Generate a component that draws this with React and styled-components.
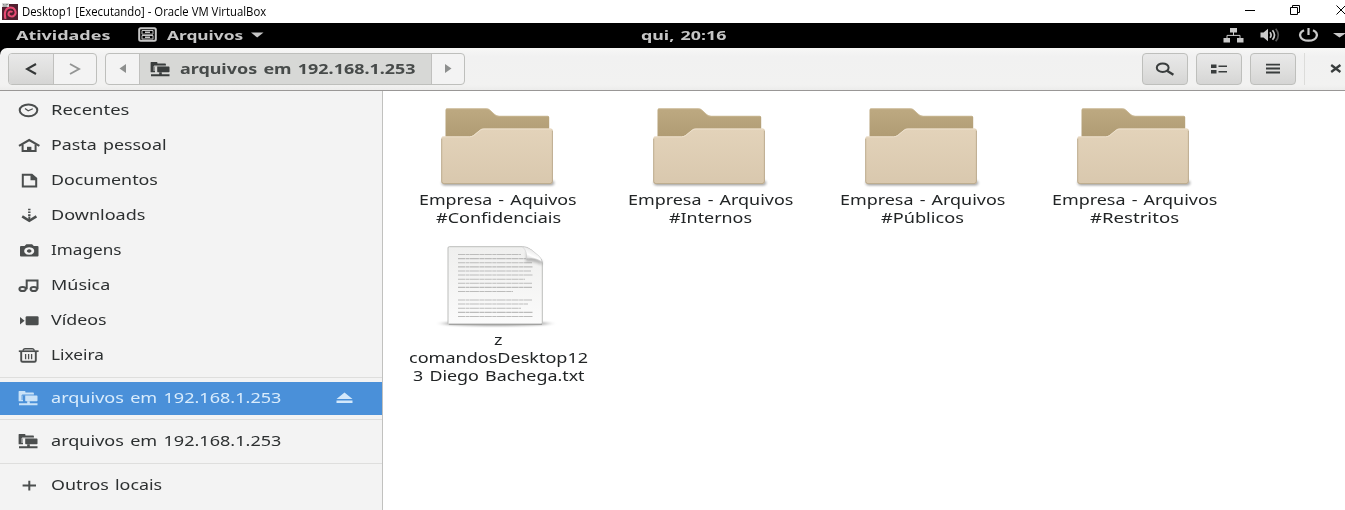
import React, { useLayoutEffect, useRef, useState } from 'react';
import styled, { createGlobalStyle, css } from 'styled-components';

const GlobalStyle = createGlobalStyle`
  * { box-sizing: border-box; }
  html, body { margin: 0; padding: 0; background: #fff; overflow: hidden; }
  body { font-family: "Noto Sans", "Open Sans", sans-serif; font-size: 14px; color: #2b2e2f; }
  svg { display: block; flex: none; }
`;

/* Text with wide proportions, fitted to a given width */
const TextBox = styled.span`
  display: block;
  flex: none;
  width: ${(p) => p.$w}px;
  line-height: 18px;
  white-space: nowrap;
  text-align: left;
  word-spacing: 1.2px;
`;
const TextInner = styled.span`
  display: inline-block;
  transform-origin: 0 50%;
`;

function WideText({ w, children, className }) {
  const ref = useRef(null);
  const [scale, setScale] = useState(1);
  useLayoutEffect(() => {
    setScale(w / ref.current.offsetWidth);
  }, [w, children]);
  return (
    <TextBox $w={w} className={className}>
      <TextInner ref={ref} style={{ transform: `scaleX(${scale})` }}>{children}</TextInner>
    </TextBox>
  );
}

const Screen = styled.div`
  width: 1345px;
  height: 510px;
  display: flex;
  flex-direction: column;
  overflow: hidden;
  background: #000;
`;

const TitleBar = styled.header`
  height: 23px;
  flex: none;
  display: flex;
  align-items: center;
  padding-left: 2px;
  background: #fff;
  color: #000;
`;
const Title = styled(WideText)`
  font-family: "Open Sans", "Noto Sans", sans-serif;
  font-size: 12px;
  margin-left: 4px;
  word-spacing: 0;
`;
const WindowControls = styled.div`
  margin-left: auto;
  display: flex;
  align-items: center;
  height: 23px;
`;

const TopBar = styled.nav`
  height: 25px;
  flex: none;
  display: flex;
  align-items: center;
  padding: 0 0 2px 16px;
  background: #000;
  color: #c6c6c6;
  font-weight: 700;
  font-size: 13px;
`;
const AppMenu = styled.div`
  display: flex;
  align-items: center;
  margin-left: 28px;
  gap: 10px;
`;
const MenuArrow = styled.svg`
  margin-left: -2px;
`;
const Clock = styled.div`
  margin-left: 377px;
`;
const Tray = styled.div`
  margin-left: auto;
  height: 23px;
`;

const HeaderBar = styled.div`
  height: 43px;
  flex: none;
  display: flex;
  align-items: center;
  padding: 0 0 1px 8px;
  background: linear-gradient(#f7f7f6, #f1f1f1 20%, #f2f2f1 88%, #ececeb);
  border-bottom: 1px solid #999796;
  border-top-left-radius: 7px;
`;
const raised = css`
  background: linear-gradient(#e9e9e9, #dededd 60%, #d5d5d4);
`;
const ButtonGroup = styled.div`
  display: flex;
  height: 32px;
  margin-right: 8px;
  border: 1px solid #bebfbc;
  border-radius: 4px;
  overflow: hidden;
  background: #f3f3f3;
`;
const Segment = styled.button`
  display: flex;
  align-items: center;
  justify-content: ${(p) => (p.$start ? 'flex-start' : 'center')};
  width: ${(p) => p.$w}px;
  height: 100%;
  padding: ${(p) => (p.$start ? '0 0 0 10px' : '0')};
  gap: 8px;
  border: 0;
  border-right: ${(p) => (p.$last ? '0' : '1px solid #c0c0be')};
  background: transparent;
  font: 700 13.5px "Noto Sans", sans-serif;
  color: #474b4a;
  ${(p) => p.$raised && raised}
  ${(p) => p.$active && css`background: #d7d8d6;`}
`;
const Actions = styled.div`
  margin-left: auto;
  display: flex;
  align-items: center;
  gap: 8px;
`;
const ToolButton = styled.button`
  width: 46px;
  height: 32px;
  padding: 0;
  display: flex;
  align-items: center;
  justify-content: center;
  border: 1px solid #bebfbc;
  border-radius: 4px;
  ${raised}
`;
const CloseArea = styled.div`
  width: 41px;
  height: 32px;
  border-left: 1px solid #dcdcda;
  display: flex;
  align-items: center;
  padding-left: 25px;
`;

const Body = styled.div`
  flex: 1;
  display: flex;
  min-height: 0;
`;
const Sidebar = styled.aside`
  width: 383px;
  flex: none;
  padding-top: 2px;
  background: #f3f3f3;
  border-right: 1px solid #c1c1bf;
`;
const Place = styled.div`
  display: flex;
  align-items: center;
  height: ${(p) => p.$h || 35}px;
  padding: 0 0 1px 18px;
  gap: 11px;
  color: ${(p) => (p.$selected ? '#d9ecfc' : '#2d3031')};
  background: ${(p) => (p.$selected ? '#4a90d9' : 'transparent')};
`;
const Eject = styled.span`
  margin-left: auto;
  padding-right: 29px;
`;
const Divider = styled.hr`
  height: 1px;
  margin: 4px 0;
  border: 0;
  background: #dededd;
`;

const Files = styled.main`
  flex: 1;
  background: #fff;
  padding: 13px 0 0 9px;
  display: grid;
  grid-template-columns: repeat(4, 212px);
  grid-auto-rows: 140px;
  align-content: start;
`;
const FileItem = styled.figure`
  margin: 0;
  display: flex;
  flex-direction: column;
  align-items: center;
`;
const Caption = styled.figcaption`
  margin-top: 3px;
  display: flex;
  flex-direction: column;
  align-items: center;
  color: #222526;
`;

const G = '#4b4e4e';

const placeIcons = {
  recent: (
    <g fill="none" stroke={G} strokeWidth="2">
      <ellipse cx="10.5" cy="8.3" rx="8.8" ry="5.9" />
      <path d="M7 6.4l3.2 2.3 4.6-2" strokeWidth="1.2" />
    </g>
  ),
  home: (
    <g>
      <path d="M1 8.900L11.200 3l10.200 5.900" fill="none" stroke={G} strokeWidth="2.200" />
      <path d="M4.600 7.500v6.600h13V7.500" fill="none" stroke={G} strokeWidth="2" />
      <path d="M9 14.500V9.800h4.400v4.700z" fill={G} />
    </g>
  ),
  doc: (
    <g>
      <path d="M4.800 2.700h9l4.400 3.800v8H4.800z" fill="none" stroke={G} strokeWidth="2" />
      <path d="M12.500 2.500h1.700l4.500 3.900v1.800h-6.200z" fill={G} />
    </g>
  ),
  download: (
    <g fill="none" stroke={G}>
      <path d="M11.300 1.800v1.500M11.300 4.500v1.600M11.300 7.300v1.600" strokeWidth="2.400" />
      <path d="M11.300 9.500v4" strokeWidth="2" />
      <path d="M4.200 9.400l7.100 4.400 7.100-4.400" strokeWidth="2.500" />
    </g>
  ),
  camera: (
    <path d="M3 4h3.600l1.700-1.700h5.800L15.800 4h3.700q1 0 1 1v8.500q0 1-1 1H3q-1 0-1-1V5q0-1 1-1zM11.200 5.200a5 3.800 0 1 0 .01 0zM11.200 7.300a2.300 1.700 0 1 1-.01 0z" fill={G} fillRule="evenodd" />
  ),
  music: (
    <g fill="none" stroke={G} strokeWidth="2">
      <ellipse cx="4.600" cy="12" rx="3.200" ry="2.100" />
      <ellipse cx="15.800" cy="12" rx="3.200" ry="2.100" />
      <path d="M8.700 12.300V3.400H19.500V12.300" />
    </g>
  ),
  video: (
    <g fill={G}>
      <rect x="7.600" y="4.200" width="13" height="9" rx="1.300" />
      <path d="M2 5l4.600 3.700L2 12.500z" />
    </g>
  ),
  trash: (
    <g fill="none" stroke={G}>
      <path d="M0.800 4.200h19.800" strokeWidth="1.700" />
      <path d="M4.800 3.600q1-1.800 2.200-1.800h7.300q1.200 0 2.200 1.800" strokeWidth="1.500" />
      <path d="M3.200 4.500v8.900q0 1.400 1.400 1.400h11.800q1.400 0 1.400-1.400V4.500" strokeWidth="1.900" />
      <path d="M7.600 6.900v5.400M10.600 6.900v5.400M13.600 6.900v5.400" strokeWidth="1.300" />
    </g>
  ),
  plus: <path d="M4.600 8.500h13.400M11.300 3.700v9.800" stroke={G} strokeWidth="2" fill="none" />,
};

function NetFolder({ color = G, gap = '#f3f3f3' }) {
  return (
    <svg width="22" height="16" viewBox="0 0 22 16">
      <path d="M0.600 1.600q0-.6.600-.6h5.600q.6 0 .6.600v1h7.800q.700 0 .700.700v2H5v6H1.200q-.6 0-.6-.6z" fill={color} />
      <path d="M4.100 10V5h12" stroke={gap} strokeWidth="0.900" fill="none" />
      <path d="M7.200 5.600h11.600q.700 0 .700.700v4.200q0 .700-.700.700H7.900q-.700 0-.700-.700z" fill={color} />
      <path d="M9.200 11.200h2.600v2.100h7.700v1.900H1v-1.900h8.200z" fill={color} />
    </svg>
  );
}

function PlaceIcon({ name }) {
  return <svg width="22" height="16" viewBox="0 0 22 16">{placeIcons[name]}</svg>;
}

function FolderArt() {
  return (
    <svg width="124" height="84" viewBox="0 0 124 84">
      <defs>
        <linearGradient id="back" x2="0" y2="1">
          <stop offset="0" stopColor="#bda981" />
          <stop offset="1" stopColor="#a8946c" />
        </linearGradient>
        <linearGradient id="front" x2="0" y2="1">
          <stop offset="0" stopColor="#e3d3ba" />
          <stop offset="1" stopColor="#d9c8ae" />
        </linearGradient>
        <filter id="soft" x="-10%" y="-100%" width="120%" height="300%"><feGaussianBlur stdDeviation="1.500 1" /></filter>
      </defs>
      <rect x="6" y="76.500" width="112" height="5" rx="2" fill="#000" opacity=".35" filter="url(#soft)" />
      <path d="M9.500 50V6q0-1.500 1.500-1.500h39q2.500 0 4 1.400l5 4.700q1.500 1.300 4 1.300h48.800q1.400 0 1.400 1.400V50z" fill="url(#back)" />
      <path d="M10 5.200Q10.500 4.800 11 4.800h39q2.500 0 4 1.400l5 4.700q1.500 1.300 4 1.300h49" fill="none" stroke="#cdbb98" strokeWidth=".8" />
      <path d="M5.300 34.400q0-2 2-2h26q2.600 0 4.300-1.400l6.200-5.100q1.600-1.300 4-1.300h67q2 0 2 2V77.200q0 2.800-2.800 2.800H8.100q-2.800 0-2.800-2.800z" fill="url(#front)" />
      <path d="M6 33.200Q6.500 32.800 7.500 32.800h26q2.600 0 4.300-1.400l6.200-5.100q1.600-1.300 4-1.300h67" fill="none" stroke="#eee2cf" strokeWidth=".9" />
      <path d="M5.700 34.700v42.500q0 2.400 2.400 2.400h105.900q2.400 0 2.400-2.400V26.700" fill="none" stroke="#b3a183" strokeWidth=".8" />
    </svg>
  );
}

const textLines = [
  [10.500, 63], [14.600, 70], [18.800, 74], [22.900, 75], [27, 73], [31, 75], [35.200, 67], [39.300, 74], [43.400, 74], [47.500, 55],
  [56, 74], [60, 70], [64.200, 63], [68.400, 75], [72.500, 75],
];

function DocumentArt() {
  return (
    <svg width="124" height="84" viewBox="0 0 124 84">
      <defs>
        <linearGradient id="paper" x2="0" y2="1">
          <stop offset="0" stopColor="#efefee" />
          <stop offset="1" stopColor="#fbfbfb" />
        </linearGradient>
        <linearGradient id="curl" x1=".2" y1="1" x2=".8" y2="0">
          <stop offset="0" stopColor="#b4b4b4" />
          <stop offset=".4" stopColor="#fff" />
          <stop offset="1" stopColor="#d4d4d4" />
        </linearGradient>
        <filter id="docShadow" x="-20%" y="-200%" width="140%" height="500%"><feGaussianBlur stdDeviation="4 1.200" /></filter>
        <filter id="curlShadow" x="-30%" y="-30%" width="160%" height="180%"><feGaussianBlur stdDeviation="1.500" /></filter>
      </defs>
      <ellipse cx="60" cy="79.500" rx="53" ry="2.500" fill="#000" opacity=".36" filter="url(#docShadow)" />
      <path d="M12 4q0-1.300 1.300-1.300h73q5 0 9 3.300l8 7q3 3 3 6V79.200q0 1.200-1.300 1.200H13.300q-1.300 0-1.300-1.200z" fill="url(#paper)" stroke="#bcbdbb" strokeWidth="1" />
      <path d="M13 80.200h93" stroke="#90918f" strokeWidth=".9" />
      {textLines.map(([y, w]) => (
        <path key={y} d={`M22 ${y}h${w}`} stroke="#bcbcbb" strokeWidth="1.100" strokeDasharray="7 .5 4 .4 9 .5 5 .4" />
      ))}
      <path d="M90 8q2 6-1 10 8-2 17 3V17z" fill="#000" opacity=".25" filter="url(#curlShadow)" />
      <path d="M86.500 2.700q5.500 5.300 3.500 12.300 8-2.500 16 2.800-.5-3.800-3.500-6.300L95 5.500q-4-2.800-8.500-2.800z" fill="url(#curl)" stroke="#c4c4c4" strokeWidth=".5" />
    </svg>
  );
}

const places = [
  ['recent', 'Recentes', 79],
  ['home', 'Pasta pessoal', 116],
  ['doc', 'Documentos', 107],
  ['download', 'Downloads', 94],
  ['camera', 'Imagens', 71],
  ['music', 'Música', 59],
  ['video', 'Vídeos', 56],
  ['trash', 'Lixeira', 53],
];

const files = [
  { art: FolderArt, lines: [['Empresa - Aquivos', 158], ['#Confidenciais', 125]] },
  { art: FolderArt, lines: [['Empresa - Arquivos', 165], ['#Internos', 83]] },
  { art: FolderArt, lines: [['Empresa - Arquivos', 165], ['#Públicos', 83]] },
  { art: FolderArt, lines: [['Empresa - Arquivos', 165], ['#Restritos', 89]] },
  { art: DocumentArt, lines: [['z', 9], ['comandosDesktop12', 179], ['3 Diego Bachega.txt', 171]] },
];

export default function App() {
  return (
    <Screen>
      <GlobalStyle />
      <TitleBar>
        <svg width="16" height="17" viewBox="0 0 16 17">
          <rect y="1" width="16" height="16" fill="#50202f" />
          <path d="M3.500 16C1.500 9 4 4.500 8.500 4.500s6.500 5 4 7.700-7 .6-5.800-2.300c.8-1.900 3.100-1.700 3.500-.5" fill="none" stroke="#e84a73" strokeWidth="2" />
          <path d="M0 0h7v4H0z" fill="#d8d8d8" />
          <path d="M1 1.500h1.500M3.500 1.500H6M1 3h4" stroke="#777" strokeWidth=".8" />
        </svg>
        <Title w={244}>Desktop1 [Executando] - Oracle VM VirtualBox</Title>
        <WindowControls>
          <svg width="101" height="23" viewBox="0 0 101 23" fill="none" stroke="#000">
            <path d="M1 10.500h10" />
            <path d="M46.500 7.500h7v7h-7zM48.500 7.500v-2h7v7h-2" />
            <path d="M92.500 5.500l9 9M101.500 5.500l-9 9" />
          </svg>
        </WindowControls>
      </TitleBar>

      <TopBar>
        <WideText w={94}>Atividades</WideText>
        <AppMenu>
          <svg width="19" height="15" viewBox="0 0 19 15" fill="none" stroke="#c6c6c6">
            <rect x="1.200" y="1.200" width="16.600" height="12.600" rx="1.500" strokeWidth="2" />
            <path d="M4 3.500h11v3.700H4zM4 8.500h11v3.500H4z" strokeWidth="1" />
            <path d="M7 5.300h5M7 10.200h5" strokeWidth="1.500" />
          </svg>
          <WideText w={76}>Arquivos</WideText>
          <MenuArrow width="13" height="6" viewBox="0 0 13 6"><path d="M0 .5h12.500L6.200 5.500z" fill="#c6c6c6" /></MenuArrow>
        </AppMenu>
        <Clock><WideText w={85}>qui, 20:16</WideText></Clock>
        <Tray>
          <svg width="122" height="25" viewBox="1223 23 122 25">
            <g fill="#c9c9c9">
              <path d="M1230 28h7v4.500h-7zM1223.500 38h6.500v4.500h-6.500zM1237 38h6.500v4.500h-6.500z" />
              <path d="M1227 38v-2.600h13V38M1233.500 32v3.500" fill="none" stroke="#c9c9c9" />
              <path d="M1260.500 32.500h3l4.500-3.800v12.600l-4.500-3.800h-3z" />
            </g>
            <g fill="none" stroke="#c9c9c9" strokeWidth="1.700">
              <path d="M1270 32.200q2.200 2.800 0 5.600" />
              <path d="M1272.500 30.200q4 4.800 0 9.600" />
              <path d="M1275.700 28.700q5.200 6.300 0 12.600" stroke="#555" />
              <path d="M1304 30.300c-6.500 3-4.500 10.400 4.500 10.400s11-7.400 4.500-10.400M1308.500 28v7" strokeWidth="2.200" />
            </g>
            <path d="M1333 33h13l-6.500 4.500z" fill="#c9c9c9" />
          </svg>
        </Tray>
      </TopBar>

      <HeaderBar>
        <ButtonGroup>
          <Segment $w={45} $raised>
            <svg width="12" height="12" viewBox="0 0 12 12"><path d="M11 1L2 6l9 5" fill="none" stroke="#353838" strokeWidth="2.100" /></svg>
          </Segment>
          <Segment $w={42} $last>
            <svg width="12" height="12" viewBox="0 0 12 12"><path d="M1 1l9 5-9 5" fill="none" stroke="#939594" strokeWidth="1.900" /></svg>
          </Segment>
        </ButtonGroup>
        <ButtonGroup>
          <Segment $w={34}>
            <svg width="8" height="9" viewBox="0 0 8 9"><path d="M7 0v9L.5 4.500z" fill="#8d8f8e" /></svg>
          </Segment>
          <Segment $w={292} $active $start>
            <NetFolder color="#393d3d" gap="#d7d8d6" />
            <WideText w={235}>arquivos em 192.168.1.253</WideText>
          </Segment>
          <Segment $w={32} $last>
            <svg width="8" height="9" viewBox="0 0 8 9"><path d="M1 0v9l6.500-4.500z" fill="#8d8f8e" /></svg>
          </Segment>
        </ButtonGroup>
        <Actions>
          <ToolButton>
            <svg width="20" height="14" viewBox="0 0 20 14" fill="none" stroke="#393d3d">
              <ellipse cx="7.700" cy="5.700" rx="5.900" ry="4.300" strokeWidth="2" />
              <path d="M12 8.800l6.400 4" strokeWidth="2.400" />
            </svg>
          </ToolButton>
          <ToolButton>
            <svg width="18" height="10" viewBox="0 0 18 10" fill="#393d3d">
              <path d="M1 .5h5.500v3.500H1zM1 6h5.500v3.500H1zM8.500 1.500H17v1.400H8.500zM8.500 7H17v1.400H8.500z" />
            </svg>
          </ToolButton>
          <ToolButton>
            <svg width="14" height="11" viewBox="0 0 14 11" fill="#393d3d">
              <path d="M0 .7h14v1.900H0zM0 4.600h14v1.900H0zM0 8.500h14v1.900H0z" />
            </svg>
          </ToolButton>
          <CloseArea>
            <svg width="12" height="9" viewBox="0 0 12 9"><path d="M1.200 1l9.200 7M10.400 1L1.200 8" stroke="#393d3d" strokeWidth="2.300" /></svg>
          </CloseArea>
        </Actions>
      </HeaderBar>

      <Body>
        <Sidebar>
          {places.map(([icon, label, w]) => (
            <Place key={icon}>
              <PlaceIcon name={icon} />
              <WideText w={w}>{label}</WideText>
            </Place>
          ))}
          <Divider />
          <Place $h={33} $selected>
            <NetFolder color="#c9e2f8" gap="#4a90d9" />
            <WideText w={231}>arquivos em 192.168.1.253</WideText>
            <Eject>
              <svg width="17" height="12" viewBox="0 0 17 12" fill="#d3e8fb"><path d="M8.500 .6L16.500 7H.5zM.5 8.600h16v2.300H.5z" /></svg>
            </Eject>
          </Place>
          <Divider />
          <Place $h={35}>
            <NetFolder />
            <WideText w={231}>arquivos em 192.168.1.253</WideText>
          </Place>
          <Divider />
          <Place $h={34}>
            <PlaceIcon name="plus" />
            <WideText w={111}>Outros locais</WideText>
          </Place>
        </Sidebar>
        <Files>
          {files.map(({ art: Art, lines }, i) => (
            <FileItem key={i}>
              <Art />
              <Caption>
                {lines.map(([text, w]) => <WideText key={text} w={w}>{text}</WideText>)}
              </Caption>
            </FileItem>
          ))}
        </Files>
      </Body>
    </Screen>
  );
}
